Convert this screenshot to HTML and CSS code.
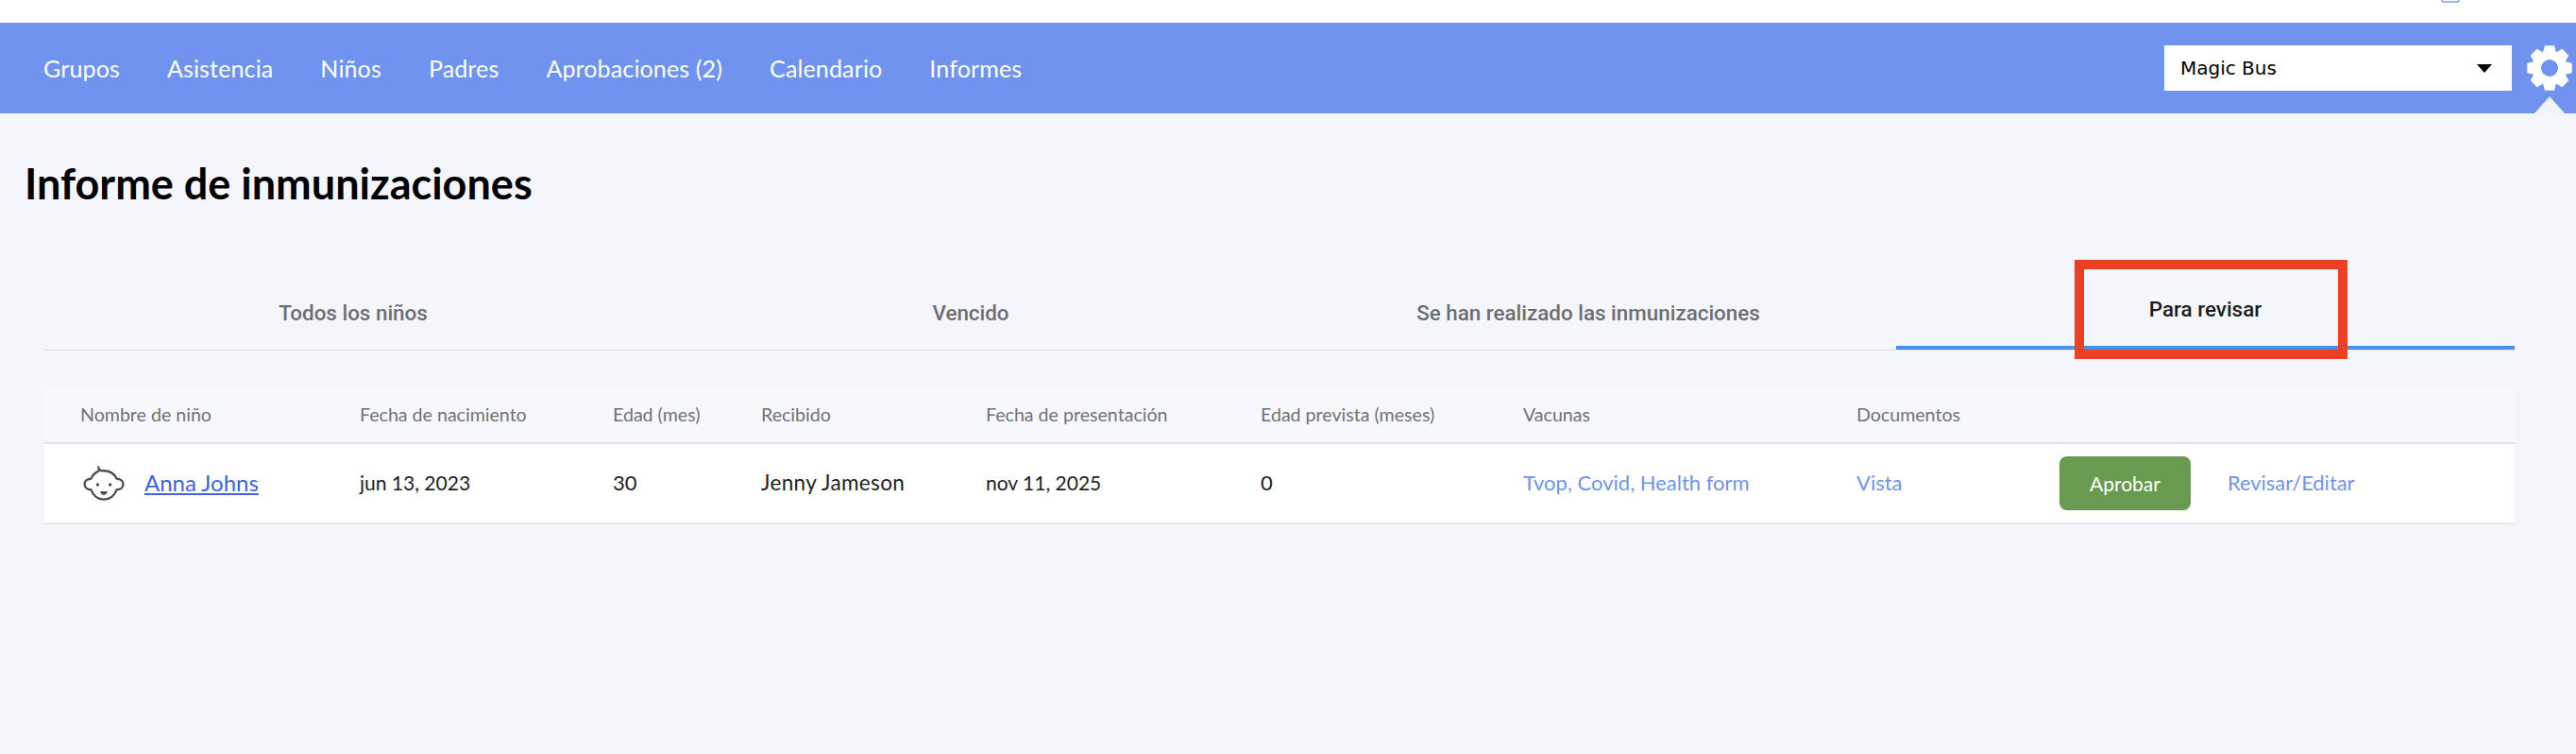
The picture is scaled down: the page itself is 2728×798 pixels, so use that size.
FILE: index.html
```html
<!DOCTYPE html>
<html lang="es">
<head>
<meta charset="utf-8">
<title>Informe de inmunizaciones</title>
<link rel="stylesheet" href="styles.css">
</head>
<body>
<div class="topbar">
  <svg class="top-icon" width="20" height="3" viewBox="0 0 20 3"><path d="M1 -6V0a2 2 0 0 0 2 2H17a2 2 0 0 0 2 -2V-6" fill="none" stroke="#7f9df0" stroke-width="1.5"/></svg>
</div>
<header class="nav">
  <nav class="nav-links">
    <a>Grupos</a><a>Asistencia</a><a>Niños</a><a>Padres</a><a>Aprobaciones (2)</a><a>Calendario</a><a>Informes</a>
  </nav>
  <div class="nav-right">
    <div class="select"><span>Magic Bus</span><i class="caret"></i></div>
    <svg class="gear" width="48" height="48" viewBox="-24 -24 48 48">
      <g fill="#fff" stroke="#fff" stroke-width="1.5" stroke-linejoin="round">
        <path d="M-4.500 -23H4.500L6.500 -15H-6.500Z"/>
        <path d="M-4.500 -23H4.500L6.500 -15H-6.500Z" transform="rotate(45)"/>
        <path d="M-4.500 -23H4.500L6.500 -15H-6.500Z" transform="rotate(90)"/>
        <path d="M-4.500 -23H4.500L6.500 -15H-6.500Z" transform="rotate(135)"/>
        <path d="M-4.500 -23H4.500L6.500 -15H-6.500Z" transform="rotate(180)"/>
        <path d="M-4.500 -23H4.500L6.500 -15H-6.500Z" transform="rotate(225)"/>
        <path d="M-4.500 -23H4.500L6.500 -15H-6.500Z" transform="rotate(270)"/>
        <path d="M-4.500 -23H4.500L6.500 -15H-6.500Z" transform="rotate(315)"/>
      </g>
      <circle r="13.500" fill="none" stroke="#fff" stroke-width="9"/>
    </svg>
  </div>
  <i class="notch"></i>
</header>
<main class="content">
  <h1 class="title">Informe de inmunizaciones</h1>
  <div class="tabs">
    <div class="tab">Todos los niños</div>
    <div class="tab">Vencido</div>
    <div class="tab">Se han realizado las inmunizaciones</div>
    <div class="tab active">Para revisar</div>
    <i class="highlight"></i>
  </div>
  <div class="table">
    <div class="row head">
      <div>Nombre de niño</div>
      <div>Fecha de nacimiento</div>
      <div>Edad (mes)</div>
      <div>Recibido</div>
      <div>Fecha de presentación</div>
      <div>Edad prevista (meses)</div>
      <div>Vacunas</div>
      <div>Documentos</div>
      <div></div>
    </div>
    <div class="row body">
      <div class="name">
        <svg class="baby" width="44" height="38" viewBox="0 0 46 40" fill="none" stroke="#4a4e57" stroke-width="2.500" stroke-linecap="round" stroke-linejoin="round">
          <path d="M17 1.500C17 4.500 20 5.500 23 5.500C30 5.500 35 9.500 37.500 14.500C41.500 14.500 44.500 17 44.500 20.500C44.500 24 41.500 26.500 37.500 26.500C35 33 29.500 37.500 23 37.500C16.500 37.500 11 33 8.500 26.500C4.500 26.500 1.500 24 1.500 20.500C1.500 17 4.500 14.500 8.500 14.500C10.500 10.500 13.500 7.500 17 6"/>
          <circle cx="16" cy="21" r="1.800" fill="#4a4e57" stroke="none"/>
          <circle cx="30" cy="21" r="1.800" fill="#4a4e57" stroke="none"/>
          <path d="M19 28.500H27C27 31 25 32.500 23 32.500C21 32.500 19 31 19 28.500Z" fill="#4a4e57" stroke="none"/>
        </svg>
        <a class="child">Anna Johns</a>
      </div>
      <div class="date">jun 13, 2023</div>
      <div>30</div>
      <div class="person">Jenny Jameson</div>
      <div class="date">nov 11, 2025</div>
      <div>0</div>
      <div class="link">Tvop, Covid, Health form</div>
      <div class="link">Vista</div>
      <div class="actions"><button class="approve">Aprobar</button><a class="link edit">Revisar/Editar</a></div>
    </div>
  </div>
</main>
</body>
</html>
```
FILE: styles.css
```css
* { box-sizing: border-box; }
html, body { margin: 0; height: 100%; }
body { background: #f5f6fb; font-family: Lato, "Open Sans", sans-serif; overflow: hidden; }
.topbar { height: 24px; background: #fff; display: flex; justify-content: flex-end; padding-right: 123px; }
.top-icon { display: block; }
.nav { position: relative; height: 96px; background: #6f93ee; display: flex; align-items: center; justify-content: space-between; padding: 0 4px 0 46px; }
.nav-links { display: flex; gap: 50px; }
.nav-links a { color: #fff; font-size: 25px; letter-spacing: 0.14px; }
.nav-right { display: flex; align-items: center; gap: 16px; }
.select { width: 368px; height: 48px; background: #fff; display: flex; align-items: center; justify-content: space-between; padding: 0 21px 0 17px; font-family: "DejaVu Sans", sans-serif; font-size: 20px; color: #000; }
.caret { width: 0; height: 0; border-left: 8px solid transparent; border-right: 8px solid transparent; border-top: 9px solid #000; }
.gear { display: block; }
.notch { position: absolute; right: 12px; bottom: 0; width: 0; height: 0; border-left: 16px solid transparent; border-right: 16px solid transparent; border-bottom: 18px solid #f1f3fa; }
.content { padding: 0 65px 0 47px; }
.title { margin: 47px 0 0 -21px; height: 56px; font-size: 45px; line-height: 54px; font-weight: 700; color: #000; }
.tabs { position: relative; margin-top: 49px; display: grid; grid-template-columns: repeat(4, 1fr); border-bottom: 1px solid #dcdde3; height: 99px; }
.tab { display: flex; align-items: center; justify-content: center; height: 98px; padding-top: 20px; font-family: Roboto, sans-serif; font-weight: 500; font-size: 22.4px; color: #6d6e72; }
.tab.active { color: #1c1d20; border-bottom: 4px solid #4a90e8; padding-top: 16px; margin-left: -1px; }
.highlight { position: absolute; left: 2150px; top: 3px; width: 289px; height: 105px; border: 10px solid #ec4026; }
.table { margin-top: 38px; }
.row { display: grid; grid-template-columns: 296px 268px 157px 238px 291px 278px 353px 215px 1fr; align-items: center; padding-left: 38px; }
.head { height: 61px; background: #f7f8fc; border-bottom: 2px solid #e0e1e6; font-size: 19.6px; color: #717277; }
.body { height: 85px; padding-bottom: 2px; background: #fff; border-bottom: 2px solid #e8e9ed; font-size: 22px; color: #1e1e20; }
.name { display: flex; align-items: center; gap: 21px; margin-left: 3px; }
.baby { display: block; margin-top: 2px; }
.child { color: #3f63e0; text-decoration: underline; font-size: 24px; }
.date { font-size: 21px; }
.person { font-size: 22.5px; letter-spacing: 0.35px; }
.link { color: #6f92ee; }
.actions { display: flex; align-items: center; gap: 39px; }
.approve { width: 139px; height: 57px; margin-top: 1px; background: #689a50; color: #fff; border: 0; border-radius: 8px; font: inherit; font-size: 21px; }
.edit { font-size: 21.9px; }
```
